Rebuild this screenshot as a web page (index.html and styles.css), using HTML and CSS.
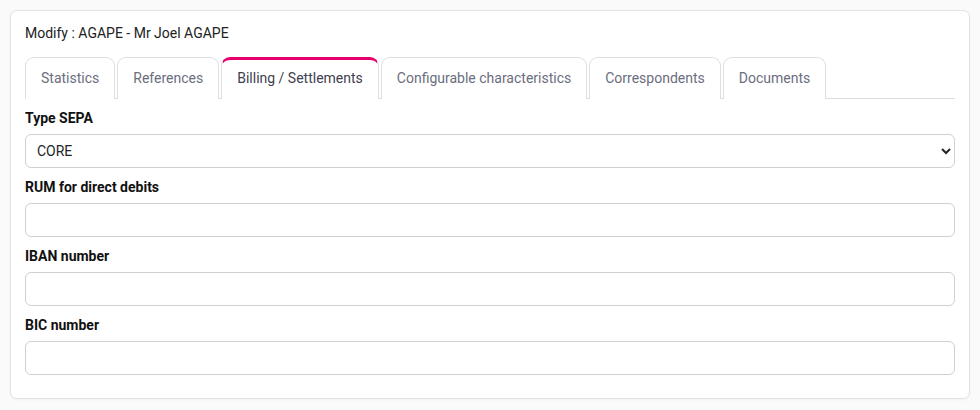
FILE: index.html
```html
<!DOCTYPE html>
<html lang="en">
<head>
<meta charset="utf-8">
<title>Modify</title>
<link rel="stylesheet" href="styles.css">
</head>
<body>
<div class="page">
  <div class="card">
    <div class="card-title">Modify : AGAPE - Mr Joel AGAPE</div>
    <ul class="tabs">
      <li class="tab">Statistics</li>
      <li class="tab">References</li>
      <li class="tab active">Billing / Settlements</li>
      <li class="tab">Configurable characteristics</li>
      <li class="tab">Correspondents</li>
      <li class="tab">Documents</li>
    </ul>
    <form class="form">
      <div class="field">
        <label class="label" for="sepa">Type SEPA</label>
        <select id="sepa" class="control select">
          <option>CORE</option>
          <option>B2B</option>
        </select>
      </div>
      <div class="field">
        <label class="label" for="rum">RUM for direct debits</label>
        <input id="rum" class="control" type="text">
      </div>
      <div class="field">
        <label class="label" for="iban">IBAN number</label>
        <input id="iban" class="control" type="text">
      </div>
      <div class="field">
        <label class="label" for="bic">BIC number</label>
        <input id="bic" class="control" type="text">
      </div>
    </form>
  </div>
</div>
</body>
</html>
```

FILE: styles.css
```css
* { box-sizing: border-box; }
html, body { margin: 0; padding: 0; }
body {
  background: #fafafa;
  font-family: Roboto, "Liberation Sans", sans-serif;
  font-size: 14px;
  color: #212529;
}
.page { padding: 10px; }
.card {
  background: #fff;
  border: 1px solid #e2e2e2;
  border-radius: 7px;
  box-shadow: 0 1px 3px rgba(0,0,0,0.04);
  padding: 12px 14px 23px 14px;
}
.card-title {
  line-height: 20px;
  color: #222;
}
.tabs {
  list-style: none;
  margin: 14px 0 0 0;
  padding: 0;
  display: flex;
  gap: 2px;
  border-bottom: 1px solid #dcdce0;
}
.tab {
  border: 1px solid #dedee3;
  border-bottom: none;
  border-radius: 9px 9px 0 0;
  padding: 10px 15px 11px 15px;
  line-height: 20px;
  color: #6b6e7e;
  background: #fff;
  margin-bottom: -1px;
}
.tab.active {
  border-top: 3px solid #e6006e;
  padding-top: 8px;
  color: #3f4150;
}
.form { display: block; }
.field { margin-top: 9px; }
.label {
  display: block;
  font-weight: 700;
  line-height: 20px;
  margin-bottom: 6px;
  color: #111;
}
.control {
  display: block;
  width: 100%;
  height: 34px;
  border: 1px solid #cfcfd4;
  border-radius: 6px;
  background: #fff;
  font-family: Roboto, "Liberation Sans", sans-serif;
  font-size: 14px;
  color: #212529;
  padding: 0 10px;
}
.select { padding-left: 7px; }
```
